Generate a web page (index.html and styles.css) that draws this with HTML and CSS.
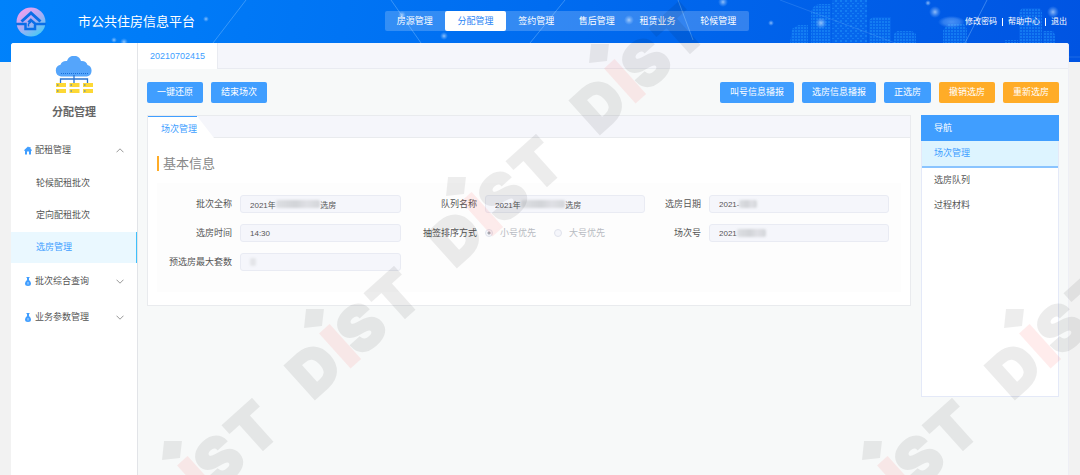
FILE: index.html
```
<!DOCTYPE html>
<html lang="zh-CN">
<head>
<meta charset="utf-8">
<title>市公共住房信息平台</title>
<link rel="stylesheet" href="styles.css">
</head>
<body>
<svg class="skyline" width="1080" height="62" aria-hidden="true">
  <defs>
    <pattern id="windows" width="3" height="3" patternUnits="userSpaceOnUse"><rect width="2" height="2" fill="#2aa5ff"/></pattern>
    <pattern id="windows-wide" width="5" height="5" patternUnits="userSpaceOnUse"><rect width="2" height="2" fill="#2aa5ff"/><rect x="2" y="3" width="2" height="1" fill="#2aa5ff"/></pattern>
    <radialGradient id="glow"><stop offset="0" stop-color="#cfe6ff" stop-opacity=".7"/><stop offset="1" stop-color="#7fbaff" stop-opacity="0"/></radialGradient>
  </defs>
  <g fill="url(#windows)" opacity=".4">
    <path d="M790 43l2-14 6-4h10v18zM811 43V12q2-7 8-8h12v39zM869 43V20l4-3h18v26zM894 43V34l3-3h15l4 3v9zM943 43V30l5-6h16l3 5v14zM1019 43V12l3-4h18l2 4v31zM1043 43V31h10l2 4v8zM1004 43v-3h14v3z"/>
    <path d="M832 0h35v43h-35z" fill="url(#windows-wide)"/>
  </g>
  <g fill="#1f8dff" opacity=".18">
    <path d="M790 43l2-14 6-4h10v18zM811 43V12q2-7 8-8h12v39zM832 0h35v43h-35zM869 43V20l4-3h18v26zM894 43V34l3-3h15l4 3v9zM943 43V30l5-6h16l3 5v14zM1019 43V12l3-4h18l2 4v31zM1043 43V31h10l2 4v8z"/>
  </g>
  <g stroke="#8cc8ff" stroke-opacity=".4">
    <path d="M246 0l-33 43M391 0l30 43M565 0l-35 43M678 0l15 40M987 0l-22 43"/>
    <path d="M780 0l115 43M1068 57h12" stroke-opacity=".2"/>
  </g>
  <g fill="url(#glow)">
    <circle cx="206" cy="19" r="3"/><circle cx="114" cy="40" r="3"/><circle cx="124" cy="42" r="4"/>
    <circle cx="402" cy="15" r="4"/><circle cx="444" cy="36" r="4"/><circle cx="723" cy="2" r="5"/>
    <circle cx="629" cy="20" r="5"/><circle cx="771" cy="23" r="3"/><circle cx="821" cy="23" r="6"/>
    <circle cx="928" cy="3" r="3"/><circle cx="935" cy="12" r="6"/><circle cx="1053" cy="12" r="6"/>
  </g>
</svg>

<header class="topbar">
  <div class="brand">
    <svg class="logo" viewBox="0 0 30 30" aria-hidden="true">
      <defs><linearGradient id="ring" x1=".15" y1=".1" x2=".75" y2=".95"><stop offset="0" stop-color="#f0a0ee"/><stop offset=".5" stop-color="#a9aef5"/><stop offset="1" stop-color="#4cc8f4"/></linearGradient></defs>
      <circle cx="15" cy="15" r="14.500" fill="url(#ring)"/>
      <g fill="none" stroke="#0a6ee8" stroke-width="2.500">
        <path d="M5.500 14.500L15 6l9.500 8.500" stroke-width="3"/>
        <path d="M0 17h9.500v5H19v-5.500L14.800 13l-2.500 2.300M19 17h11"/>
        <path d="M12.500 19.500V17l2.300-2" stroke-width="1.500"/>
      </g>
    </svg>
    <h1 class="brand-name">市公共住房信息平台</h1>
  </div>
  <nav class="main-nav">
    <a href="#">房源管理</a>
    <a href="#" class="current">分配管理</a>
    <a href="#">签约管理</a>
    <a href="#">售后管理</a>
    <a href="#">租赁业务</a>
    <a href="#">轮候管理</a>
  </nav>
  <div class="account">
    <span class="account-name"></span>
    <a href="#">修改密码</a><i></i><a href="#">帮助中心</a><i></i><a href="#">退出</a>
  </div>
</header>

<div class="shell">
  <aside class="sidebar">
    <div class="module">
      <svg class="module-icon" width="38" height="38" viewBox="0 0 38 38" aria-hidden="true">
        <path d="M6 20.500a6 6 0 0 1-.5-11.800Q7 4.500 12 5a7.300 7.300 0 0 1 14 0q5-.5 6.500 4a6 6 0 0 1-.5 11.500z" fill="#55a5fb"/>
        <path d="M6 17.500h27" stroke="#1a6fd8" stroke-width="1" stroke-dasharray="1 1"/>
        <path d="M19 19v9M5.500 28v-5h27v5" fill="none" stroke="#2a74d0" stroke-width="1.300"/>
        <path d="M1 27h10v4H1zM14.500 27h10v4h-10zM28 27h10v4H28zM1 33h10v4H1zM14.500 33h10v4h-10zM28 33h10v4H28z" fill="#fdd835"/>
        <path d="M2 28.500h1.500v1H2zM15.500 28.500H17v1h-1.500zM29 28.500h1.500v1H29zM2 34.500h1.500v1H2zM15.500 34.500H17v1h-1.500zM29 34.500h1.500v1H29z" fill="#2a74d0"/>
      </svg>
      <h2>分配管理</h2>
    </div>
    <nav class="menu">
      <button type="button" class="group" aria-expanded="true">
        <svg class="group-icon" viewBox="0 0 8 8" aria-hidden="true"><path d="M4 0l1.300 1.100V.4h1.200v1.700L8 3.700l-.6.700L7 4.100V8H5V5H3v3H1V4.100l-.4.300L0 3.700z" fill="#409eff"/></svg>
        <span>配租管理</span>
        <svg class="chevron" viewBox="0 0 8 5" aria-hidden="true"><path d="M.5 4.300L4 .8l3.500 3.500"/></svg>
      </button>
      <a href="#">轮候配租批次</a>
      <a href="#">定向配租批次</a>
      <a href="#" class="current">选房管理</a>
      <button type="button" class="group" aria-expanded="false">
        <svg class="group-icon" viewBox="0 0 8 9" aria-hidden="true"><path d="M2.500 0h3v1H5v2q2 1.500 2 3.500Q7 9 4 9T1 6.500Q1 4.500 3 3V1h-.5z" fill="#409eff"/><path d="M4 5v2.500" stroke="#fff" stroke-width=".6"/></svg>
        <span>批次综合查询</span>
        <svg class="chevron" viewBox="0 0 8 5" aria-hidden="true"><path d="M.5.700L4 4.200 7.500.700"/></svg>
      </button>
      <button type="button" class="group" aria-expanded="false">
        <svg class="group-icon" viewBox="0 0 8 9" aria-hidden="true"><path d="M2.500 0h3v1H5v2q2 1.500 2 3.500Q7 9 4 9T1 6.500Q1 4.500 3 3V1h-.5z" fill="#409eff"/><path d="M4 5v2.500" stroke="#fff" stroke-width=".6"/></svg>
        <span>业务参数管理</span>
        <svg class="chevron" viewBox="0 0 8 5" aria-hidden="true"><path d="M.5.700L4 4.200 7.500.700"/></svg>
      </button>
    </nav>
  </aside>

  <main class="workspace">
    <div class="page-tabs"><a href="#">20210702415</a></div>
    <div class="content">
      <div class="toolbar">
        <div class="actions">
          <button type="button" class="btn">一键还原</button>
          <button type="button" class="btn">结束场次</button>
        </div>
        <div class="actions">
          <button type="button" class="btn">叫号信息播报</button>
          <button type="button" class="btn">选房信息播报</button>
          <button type="button" class="btn">正选房</button>
          <button type="button" class="btn warn">撤销选房</button>
          <button type="button" class="btn warn">重新选房</button>
        </div>
      </div>

      <div class="columns">
        <section class="card">
          <div class="card-tabs"><a href="#">场次管理</a></div>
          <div class="card-body">
            <h3>基本信息</h3>
            <form class="form">
              <label for="batch">批次全称</label>
              <div class="field"><input id="batch" type="text" disabled value="2021年                    选房"><span class="smudge long"></span></div>
              <label for="queue">队列名称</label>
              <div class="field"><input id="queue" type="text" disabled value="2021年                    选房"><span class="smudge long"></span></div>
              <label for="date">选房日期</label>
              <div class="field"><input id="date" type="text" disabled value="2021-"><span class="smudge short"></span></div>

              <label for="time">选房时间</label>
              <div class="field"><input id="time" type="text" disabled value="14:30"></div>
              <span class="label" id="order">抽签排序方式</span>
              <div class="radios" role="radiogroup" aria-labelledby="order">
                <label><input type="radio" name="order" checked disabled>小号优先</label>
                <label><input type="radio" name="order" disabled>大号优先</label>
              </div>
              <label for="session">场次号</label>
              <div class="field"><input id="session" type="text" disabled value="2021"><span class="smudge medium"></span></div>

              <label for="max">预选房最大套数</label>
              <div class="field"><input id="max" type="text" disabled><span class="smudge dot"></span></div>
            </form>
          </div>
        </section>

        <nav class="guide">
          <h3>导航</h3>
          <a href="#" class="current">场次管理</a>
          <a href="#">选房队列</a>
          <a href="#">过程材料</a>
        </nav>
      </div>
    </div>
  </main>
</div>

<svg class="watermark" aria-hidden="true">
  <defs>
    <g id="mark">
      <path d="M-9-90H9L7-73l-18 2z" fill="#000" fill-opacity=".07"/>
      <g transform="rotate(-42)">
        <text x="-3" y="0">D</text>
        <text class="mark-i" x="45" y="0">I</text>
        <text x="61" y="0">S</text>
        <text x="106" y="0">T</text>
      </g>
    </g>
  </defs>
  <use href="#mark" x="173" y="531"/>
  <use href="#mark" x="315" y="399"/>
  <use href="#mark" x="457" y="267"/>
  <use href="#mark" x="600" y="134"/>
  <use href="#mark" x="873" y="531"/>
  <use href="#mark" x="1015" y="399"/>
</svg>
</body>
</html>
```
FILE: styles.css
```
* { box-sizing: border-box; }

body {
  margin: 0;
  min-height: 100vh;
  display: flex;
  flex-direction: column;
  position: relative;
  background: linear-gradient(100deg, #0082fb, #006cf0 50%, #0054e2) no-repeat 0 0 / 100% 62px #f2f2f2;
  font: 9px/1.4 "Liberation Sans", "Noto Sans CJK SC", sans-serif;
  color: #555;
}

a { color: inherit; text-decoration: none; }
h1, h2, h3 { margin: 0; font-weight: 400; }
button, input { font: inherit; color: inherit; }

.skyline { position: absolute; top: 0; right: 0; }

.topbar {
  position: relative;
  height: 43px;
  padding: 0 13px 0 16px;
  display: flex;
  align-items: center;
  justify-content: space-between;
  color: #fff;
}
.brand { display: flex; align-items: center; gap: 32px; }
.logo { width: 30px; height: 30px; }
.brand-name { padding-top: 2px; font-size: 13px; }

.main-nav {
  display: flex;
  width: 364px;
  height: 20px;
  margin-bottom: 2px;
  border-radius: 2px;
  background: rgba(255, 255, 255, .2);
}
.main-nav a { flex: 1; line-height: 20px; text-align: center; }
.main-nav .current { background: #fff; color: #2a86f5; border-radius: 2px; }

.account { display: flex; align-items: center; font-size: 8px; }
.account i { width: 1px; height: 8px; margin: 0 5px; background: #fff; }
.account-name {
  width: 27px;
  height: 12px;
  background: radial-gradient(closest-side, rgba(120, 180, 255, .6), rgba(120, 180, 255, .4) 60%, transparent);
}

.shell {
  position: relative;
  flex: 1;
  display: flex;
  margin: 0 11px;
  border-radius: 3px 3px 0 0;
  overflow: hidden;
  background: #f7f9f9;
}

.sidebar { width: 127px; background: #fff; border-right: 1px solid #e2e4e8; }
.module {
  height: 90px;
  padding-top: 13px;
  display: flex;
  flex-direction: column;
  align-items: center;
  gap: 10px;
}
.module h2 { font-size: 11px; line-height: 16px; font-weight: 700; color: #666; }
.menu { display: flex; flex-direction: column; }
.menu a { height: 32px; padding-left: 25px; line-height: 31px; }
.menu .current {
  height: 31px;
  background: #eaf8ff;
  color: #409eff;
  border-right: 1px solid #3fc0fb;
}
.group {
  height: 36px;
  padding: 0 13px;
  display: flex;
  align-items: center;
  gap: 3px;
  border: 0;
  background: none;
  text-align: left;
}
.group:first-child { height: 35px; }
.group span { flex: 1; }
.group-icon { width: 8px; height: 9px; }
.chevron { width: 8px; height: 5px; fill: none; stroke: #999; stroke-width: 1; }

.workspace { flex: 1; min-width: 0; border-right: 1px solid #eeeff5; }
.page-tabs {
  height: 26px;
  background: #f5f6fb;
  border-bottom: 1px solid #e9ebf1;
}
.page-tabs a {
  display: inline-block;
  height: 26px;
  padding: 0 12px;
  line-height: 27px;
  background: #fff;
  border-right: 1px solid #e9ebf1;
  color: #409eff;
}

.content { padding: 13px 9px; }
.toolbar, .actions, .columns { display: flex; }
.toolbar { justify-content: space-between; }
.actions { gap: 8px; }
.btn {
  height: 21px;
  padding: 0 10px;
  border: 0;
  border-radius: 2px;
  background: #409eff;
  color: #fff;
}
.btn.warn { background: #ffac27; }

.columns { margin-top: 12px; gap: 10px; align-items: flex-start; }
.card { flex: 1; background: #fff; border: 1px solid #e9ebee; }
.card-tabs { height: 22px; background: #f5f6fb; border-bottom: 1px solid #e9ebee; }
.card-tabs a {
  display: block;
  width: 66px;
  height: 22px;
  padding-left: 13px;
  line-height: 27px;
  color: #409eff;
  background: linear-gradient(#409eff, #409eff) no-repeat 0 0 / 49px 1px #fff;
  clip-path: polygon(0 0, 49px 0, 100% 100%, 0 100%);
}
.card-body { padding: 18px 9px 13px; }
.card-body h3 {
  padding-left: 4px;
  border-left: 2px solid #ffac27;
  font-size: 13px;
  line-height: 15px;
  color: #888;
}
.form {
  display: grid;
  grid-template-columns: 75px 161fr 68px 160fr 48px 180fr;
  column-gap: 8px;
  row-gap: 11px;
  align-items: center;
  margin-top: 12px;
  padding: 12px 12px 21px 0;
  background: #fdfdfd;
}
.form > label, .label { text-align: right; white-space: nowrap; }
.field { position: relative; height: 18px; }
.field input {
  display: block;
  width: 100%;
  height: 18px;
  padding: 0 9px;
  border: 1px solid #e9ebf3;
  border-radius: 3px;
  background: #f5f6fb;
  font-size: 8px;
}
.smudge {
  position: absolute;
  top: 5px;
  left: 36px;
  height: 8px;
  border-radius: 2px;
  background: linear-gradient(90deg, #dddfe3, #d2d4d8 45%, #dfe0e5 70%, #d4d6da);
  filter: blur(1px);
}
.long { width: 44px; }
.short { left: 30px; width: 18px; }
.medium { left: 28px; width: 29px; }
.dot { left: 10px; width: 6px; background: #e4e5e9; }

.radios { display: flex; gap: 18px; height: 18px; color: #b8bbc2; }
.radios label { display: flex; align-items: center; gap: 7px; white-space: nowrap; }
.radios input {
  appearance: none;
  width: 8px;
  height: 8px;
  margin: 0;
  border: 1px solid #e0e3ec;
  border-radius: 50%;
  background: #f5f6fb;
}
.radios input:checked { background: radial-gradient(circle, #a5a8b0 0 1px, #f5f6fb 2px); }

.guide {
  width: 138px;
  min-height: 282px;
  display: flex;
  flex-direction: column;
  background: #fff;
  border: 1px solid #e4e9f8;
}
.guide h3 {
  margin: -1px -1px 0;
  padding-left: 13px;
  background: #409eff;
  color: #fff;
  font-size: 9px;
  line-height: 26px;
}
.guide a { padding-left: 12px; line-height: 25px; }
.guide .current {
  background: #ddf4ff;
  color: #409eff;
  border-bottom: 2px solid #8ac4ff;
}

.watermark {
  position: absolute;
  inset: 0;
  width: 100%;
  height: 100%;
  overflow: hidden;
  pointer-events: none;
}
.watermark text {
  font: 900 62px Inter, "Liberation Sans", sans-serif;
  fill: #000;
  stroke: #000;
  stroke-width: 2px;
  opacity: .07;
}
.watermark .mark-i { fill: #f22; stroke: #f22; opacity: .08; }
```
